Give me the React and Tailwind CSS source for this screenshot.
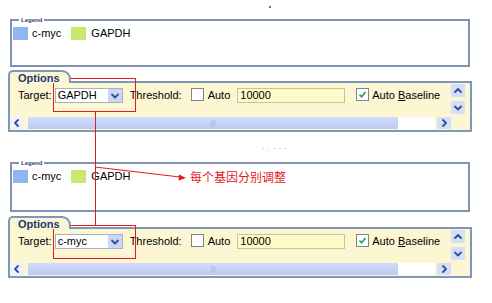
import React from "react";

function Legend({ h }) {
  return (
    <fieldset className={`ml-[10px] w-[460px] border-2 border-[#8193b0] px-[1px] pt-0 ${h}`}>
      <legend className="ml-[6px] px-[2px] text-[6px] leading-[6px] font-bold text-[#2c3f78]">Legend</legend>
      <div className="flex items-center h-[14px] mt-[3px] text-[11px] text-black">
        <div className="w-[15px] h-[13px] bg-[#8fb6ef]" />
        <span className="ml-[4px]">c-myc</span>
        <div className="ml-[10px] w-[15px] h-[13px] bg-[#c9e870]" />
        <span className="ml-[5px]">GAPDH</span>
      </div>
    </fieldset>
  );
}

function Chevron({ dir }) {
  const d = {
    up: "M2 6 L5 3 L8 6",
    down: "M2 3.5 L5 6.5 L8 3.5",
    left: "M6 2 L3 5 L6 8",
    right: "M4 2 L7 5 L4 8",
  }[dir];
  return (
    <svg width="10" height="10" viewBox="0 0 10 10">
      <path d={d} fill="none" stroke="#2d4f9e" strokeWidth="1.8" strokeLinecap="round" strokeLinejoin="round" />
    </svg>
  );
}

function Options({ target }) {
  return (
    <div className="ml-[8px] w-[464px]">
      <div className="relative z-10 w-[63px] h-[13px] border-2 border-b-0 border-[#7c98bb] rounded-tl-[5px] rounded-tr-[9px] bg-[#fcf6d2] -mb-[2px] pl-[8px] text-[11px] leading-[12px] font-bold text-[#1b3a72]">
        Options
      </div>
      <div className="h-[51px] border-2 border-[#7c98bb] bg-[#fcf6d2] flex flex-col">
        <div className="flex h-[33px]">
          <div className="flex-1 flex items-start pt-[5px] pl-[8px] text-[11px] text-black">
            <span className="leading-[14px]">Target:</span>
            <div className="ml-[3px] w-[68px] h-[15px] border border-[#a7b1c4] bg-white flex items-center">
              <span className="ml-[2px] flex-1 leading-[13px]">{target}</span>
              <div className="w-[14px] h-[13px] bg-[#c9d8f3] flex items-center justify-center">
                <Chevron dir="down" />
              </div>
            </div>
            <span className="ml-[7px] leading-[14px]">Threshold:</span>
            <div className="ml-[9px] w-[13px] h-[13px] border border-[#7a8495] bg-white" />
            <span className="ml-[4px] leading-[14px]">Auto</span>
            <div className="ml-[7px] w-[108px] h-[15px] border border-[#c7c39a] bg-[#fffbc9] flex items-center">
              <span className="ml-[2px] leading-[13px]">10000</span>
            </div>
            <div className="ml-[11px] w-[13px] h-[13px] border border-[#7a8495] bg-white flex items-center justify-center">
              <svg width="9" height="9" viewBox="0 0 9 9">
                <path d="M1.5 4.5 L3.6 6.8 L7.5 2" fill="none" stroke="#21a336" strokeWidth="1.6" />
              </svg>
            </div>
            <span className="ml-[3px] leading-[14px]">
              Auto <span className="underline">B</span>aseline
            </span>
          </div>
          <div className="w-[20px] flex flex-col items-start pl-[1px] pt-[1px] gap-[4px]">
            <div className="w-[14px] h-[13px] bg-[#d5e0f6] flex items-center justify-center">
              <Chevron dir="up" />
            </div>
            <div className="w-[14px] h-[13px] bg-[#d5e0f6] flex items-center justify-center">
              <Chevron dir="down" />
            </div>
          </div>
        </div>
        <div className="flex items-center h-[13px] pl-[1px]">
          <div className="w-[12px] h-[12px] bg-[#eef2fb] flex items-center justify-center">
            <Chevron dir="left" />
          </div>
          <div className="ml-[5px] w-[407px] h-[12px] bg-white flex">
            <div className="w-[370px] h-[12px] bg-gradient-to-b from-[#d3dcf9] to-[#bccaf3] flex items-center justify-center">
              <span className="text-[7px] text-[#9fb0d8] leading-[7px]">|||</span>
            </div>
          </div>
          <div className="ml-[2px] w-[14px] h-[12px] bg-[#d5e0f6] flex items-center justify-center">
            <Chevron dir="right" />
          </div>
        </div>
      </div>
    </div>
  );
}

export default function App() {
  const red = "#e31b1b";
  return (
    <div
      className="relative w-[492px] h-[303px] bg-white overflow-hidden"
      style={{ fontFamily: '"Liberation Sans", "Noto Sans CJK SC", sans-serif' }}
    >
      <div className="flex flex-col pt-[17px]">
        <Legend h="h-[50px]" />
        <div className="mt-[3px]">
          <Options target="GAPDH" />
        </div>
        <div className="mt-[28px]">
          <Legend h="h-[52px]" />
        </div>
        <div className="mt-[4px]">
          <Options target="c-myc" />
        </div>
      </div>

      <div className="absolute left-[269px] top-[6px] w-[2px] h-[2px] bg-[#777]" />
      <div className="absolute left-[262px] top-[144px] text-[6px] text-[#777] tracking-[1px]">- ˏ - - -</div>

      <div className="absolute left-[53px] top-[78px] w-[83px] h-[34px] border border-[#e31b1b]" />
      <div className="absolute left-[53px] top-[225px] w-[83px] h-[34px] border border-[#e31b1b]" />
      <div className="absolute left-[95px] top-[111px] w-px h-[115px] bg-[#e31b1b]" />
      <svg className="absolute left-0 top-0" width="492" height="303">
        <line x1="95" y1="167" x2="180" y2="177" stroke={red} strokeWidth="1" />
        <path d="M186 178 L179 174.5 L178.5 180.5 Z" fill={red} />
      </svg>
      <div className="absolute left-[190px] top-[171px] text-[12px] leading-[14px] text-[#e31b1b]">
        每个基因分别调整
      </div>
    </div>
  );
}
